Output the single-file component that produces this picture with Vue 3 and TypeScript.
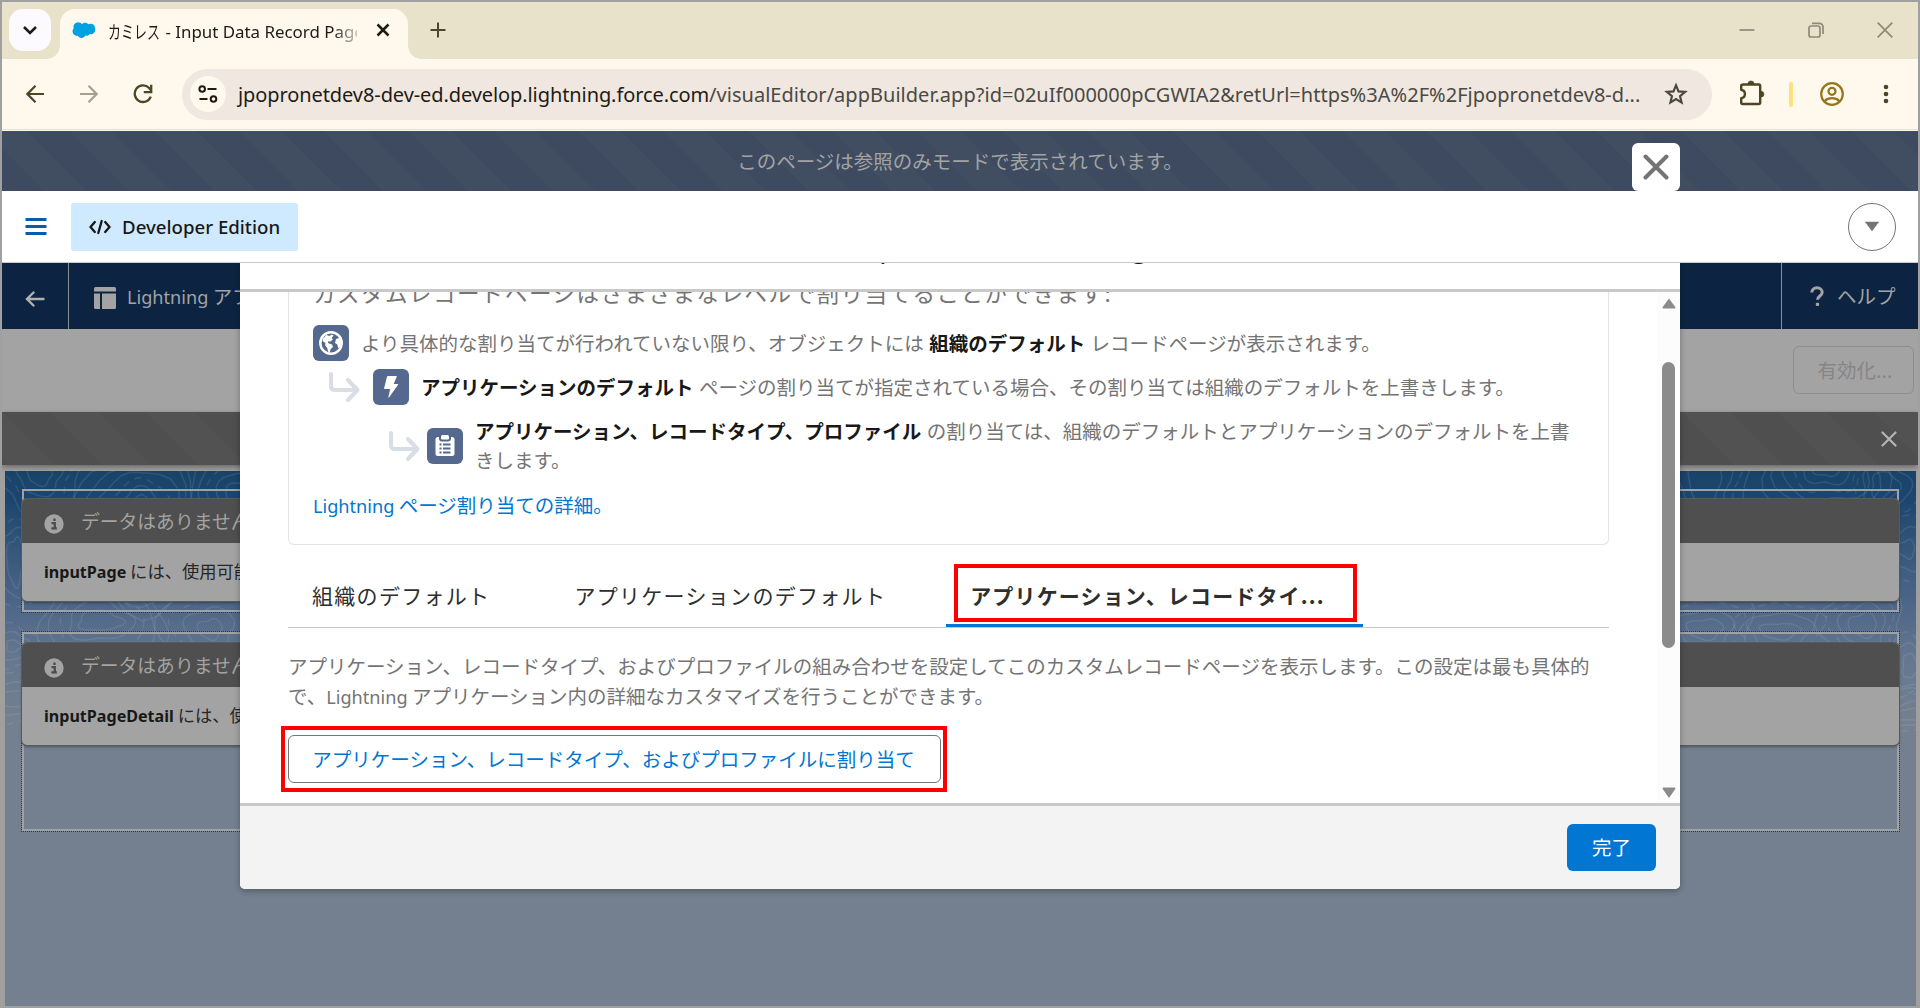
<script setup lang="ts">
import { ref } from 'vue'

interface Region { id: string; name: string; rest: string }

const url = {
  host: 'jpopronetdev8-dev-ed.develop.lightning.force.com',
  path: '/visualEditor/appBuilder.app?id=02uIf000000pCGWIA2&retUrl=https%3A%2F%2Fjpopronetdev8-d...',
}

const regions: Region[] = [
  { id: 'first', name: 'inputPage', rest: 'には、使用可能なデータがありません。' },
  { id: 'second', name: 'inputPageDetail', rest: 'には、使用可能なデータがありません。' },
]

const tabs = ['組織のデフォルト', 'アプリケーションのデフォルト', 'アプリケーション、レコードタイ...']
const activeTab = ref(2)

// Contour rings of the topographic backdrop
interface Hill { x: number; y: number; rx: number; ry: number; n: number; step: number }
const hills: Hill[] = [
  { x: 35, y: 4, rx: 12, ry: 10, n: 4, step: 10 },
  { x: 10, y: 90, rx: 8, ry: 24, n: 3, step: 10 },
  { x: 130, y: 60, rx: 20, ry: 34, n: 6, step: 9 },
  { x: 235, y: 30, rx: 14, ry: 20, n: 5, step: 9 },
  { x: 95, y: 150, rx: 22, ry: 10, n: 5, step: 10 },
  { x: 205, y: 158, rx: 12, ry: 10, n: 4, step: 12 },
  { x: 8, y: 175, rx: 7, ry: 6, n: 3, step: 8 },
  { x: 14, y: 228, rx: 18, ry: 8, n: 3, step: 8 },
  { x: 1700, y: 10, rx: 16, ry: 26, n: 4, step: 10 },
  { x: 1822, y: -6, rx: 14, ry: 12, n: 6, step: 9 },
  { x: 1880, y: 15, rx: 14, ry: 14, n: 3, step: 10 },
  { x: 1902, y: 78, rx: 8, ry: 9, n: 3, step: 12 },
  { x: 1700, y: 158, rx: 18, ry: 10, n: 4, step: 10 },
  { x: 1775, y: 160, rx: 20, ry: 8, n: 3, step: 11 },
  { x: 1858, y: 154, rx: 14, ry: 12, n: 4, step: 9 },
  { x: 1905, y: 195, rx: 8, ry: 12, n: 3, step: 9 },
  { x: 1910, y: 244, rx: 22, ry: 6, n: 4, step: 6 },
]
function ring(h: Hill, i: number): string {
  const pts: string[] = []
  for (let a = 0; a < 360; a += 12) {
    const t = (a * Math.PI) / 180
    const w = 1 + 0.12 * Math.sin(3 * t + h.x) + 0.07 * Math.cos(5 * t + i)
    const x = h.x + (h.rx + h.step * i) * w * Math.cos(t)
    const y = h.y + (h.ry + h.step * i) * w * Math.sin(t)
    pts.push(`${x.toFixed(1)} ${y.toFixed(1)}`)
  }
  return `M${pts.join('L')}Z`
}
const contours = hills.flatMap((h) =>
  Array.from({ length: h.n }, (_, i) => ({ d: ring(h, i), dashed: i % 4 === 2 })),
)
</script>

<template>
  <div class="window">
    <header class="tabstrip">
      <button class="tab-search">
        <svg width="16" height="10" viewBox="0 0 16 10"><path d="M2 2l6 6 6-6" fill="none" stroke="#1c1b14" stroke-width="2.6" /></svg>
      </button>
      <div class="tab">
        <svg class="cloud" width="24" height="17" viewBox="0 0 24 17">
          <path d="M10 2.2C11 1 12.300 .5 13.700 .7c1 .2 1.900 .7 2.500 1.600C18.500 1.200 21 1.700 22.300 3.700c1.800 2.900 1.200 6.900-2 8.200-.9 .3-1.700 .4-2.500 .2-1 1.700-2.900 2.100-4.600 1.500-1 2.700-5.700 3.500-7.300 .2C3.200 14.300 .9 12.500 .6 10 .4 8.500 .9 7.200 1.800 6.300 .8 3.300 2.400 .8 5.200 .4 7 .1 8.800 .8 10 2.200z" fill="#00a1e0" />
        </svg>
        <div class="tab-title"><span class="kana">カミレス</span><span class="rest"> - Input Data Record Page</span></div>
        <svg class="tab-close" width="14" height="14" viewBox="0 0 14 14"><path d="M1.500 1.500l11 11M12.500 1.500l-11 11" stroke="#1c1b14" stroke-width="2.500" /></svg>
      </div>
      <svg class="plus" width="16" height="16" viewBox="0 0 16 16"><path d="M8 .5v15M.5 8h15" stroke="#4a472f" stroke-width="2" /></svg>
      <div class="controls">
        <svg width="16" height="16" viewBox="0 0 16 16"><path d="M.5 8h15" stroke="#8e8979" stroke-width="1.700" /></svg>
        <svg width="16" height="16" viewBox="0 0 16 16"><g fill="none" stroke="#8e8979" stroke-width="1.700"><rect x="1" y="4" width="11" height="11" rx="2" /><path d="M4 1.300h7.500a3.500 3.500 0 0 1 3.500 3.500V12" /></g></svg>
        <svg width="16" height="16" viewBox="0 0 16 16"><path d="M.7 .7l14.600 14.600M15.300 .7L.7 15.300" stroke="#8e8979" stroke-width="1.700" /></svg>
      </div>
    </header>

    <div class="toolbar">
      <svg class="nav-back" width="18" height="18" viewBox="0 0 18 18"><path d="M18 9H1.500M9.500 .8L1.400 9l8.100 8.200" fill="none" stroke="#4d4526" stroke-width="2.200" /></svg>
      <svg class="nav-fwd" width="18" height="18" viewBox="0 0 18 18"><path d="M0 9h16.500M8.500 .8L16.600 9l-8.100 8.200" fill="none" stroke="#a6a08f" stroke-width="2.200" /></svg>
      <svg class="nav-reload" width="20" height="20" viewBox="0 0 20 20"><path d="M17.800 12.600a8.300 8.300 0 1 1-1.700-8.600l2 2.300" fill="none" stroke="#4d4526" stroke-width="2.300" /><path d="M18.200 .8v7.300h-7.400" fill="none" stroke="#4d4526" stroke-width="2.300" /></svg>
      <div class="omnibox">
        <span class="site-info">
          <svg width="20" height="18" viewBox="0 0 20 18"><g fill="none" stroke="#1c1b14" stroke-width="2"><circle cx="4.200" cy="4" r="2.800" /><path d="M9.500 4h9M1.500 14h8" /><circle cx="15.500" cy="14" r="2.800" /></g></svg>
        </span>
        <span class="url"><span class="url-host">{{ url.host }}</span>{{ url.path }}</span>
        <svg class="star" width="24" height="24" viewBox="0 0 24 24"><path d="M12 3.200l2.500 6.200 6.600 .5-5.100 4.200 1.600 6.500L12 17.100l-5.600 3.500L8 14.100 2.900 9.900l6.600-.5z" fill="none" stroke="#47463f" stroke-width="2.100" /></svg>
      </div>
      <svg class="puzzle" width="26" height="26" viewBox="0 0 26 26"><path d="M4.200 4.500h15.500q1.500 0 1.500 1.500v16.500q0 1.500-1.500 1.500H3.700q-1.500 0-1.500-1.500v-4.200c5-1 5-7.600 0-8.600V6q0-1.500 2-1.500z" fill="none" stroke="#4d4526" stroke-width="2.400" stroke-linejoin="round" /><path d="M8.900 4a3.100 3.100 0 0 1 6.200 0zM22 11.300a2.900 2.900 0 0 1 0 5.800z" fill="#4d4526" stroke="#4d4526" stroke-width=".6" /></svg>
      <i class="divider"></i>
      <svg class="profile" width="24" height="24" viewBox="0 0 24 24"><g fill="none" stroke="#94781c" stroke-width="2.200"><circle cx="12" cy="12" r="10.800" /><circle cx="12" cy="9.300" r="3.500" /><path d="M4.500 19.200c4-4 11-4 15 0" /></g></svg>
      <svg class="dots" width="6" height="20" viewBox="0 0 6 20"><g fill="#4d4526"><circle cx="3" cy="3" r="2.300" /><circle cx="3" cy="10" r="2.300" /><circle cx="3" cy="17" r="2.300" /></g></svg>
    </div>

    <div class="banner">このページは参照のみモードで表示されています。</div>

    <div class="org-bar">
      <svg width="22" height="19" viewBox="0 0 22 19"><path d="M.5 2.500h21M.5 9.500h21M.5 16.500h21" stroke="#0b5cab" stroke-width="2.800" /></svg>
      <div class="edition">
        <svg width="22" height="16" viewBox="0 0 22 16"><g fill="none" stroke="#181818" stroke-width="2.300" stroke-linecap="round"><path d="M5.800 3L1.500 8l4.300 5M16.200 3l4.300 5-4.300 5" /><path d="M12.700 2L9.300 14" /></g></svg>
        <span>Developer Edition</span>
      </div>
      <span class="round"><svg width="16" height="11" viewBox="0 0 16 11"><path d="M.8 .8h14.400L8 10.200z" fill="#747474" /></svg></span>
    </div>

    <nav class="builder-bar">
      <span class="bb-back"><svg width="20" height="16" viewBox="0 0 20 16"><path d="M18.500 8H2M8.500 1.500L2 8l6.500 6.500" fill="none" stroke="#b0b0b0" stroke-width="2.400" stroke-linecap="round" /></svg></span>
      <span class="bb-name">
        <svg width="22" height="22" viewBox="0 0 22 22"><g fill="#a3a3a3"><path d="M1.500 0h19Q22 0 22 1.500V4.500H0V1.500Q0 0 1.500 0z" /><path d="M0 6.500h6V22H1.500Q0 22 0 20.500zM8 6.500h14v14q0 1.500-1.500 1.500H8z" /></g></svg>
        <span class="bb-text"><span class="en">Lightning</span> アプリケーションビルダー</span>
      </span>
      <span class="bb-help">
        <svg width="14" height="21" viewBox="0 0 14 21"><path d="M1.800 6.500C1.800 3.500 4 1.800 7 1.800s5.200 1.800 5.200 4.400c0 3.700-4.700 3.900-4.700 7.600" fill="none" stroke="#a3a3a3" stroke-width="3" /><rect x="5.800" y="16.800" width="3.300" height="3.300" rx="1" fill="#a3a3a3" /></svg>
        <span class="bb-text">ヘルプ</span>
      </span>
    </nav>

    <div class="action-bar"><button class="activate">有効化...</button></div>

    <div class="notice">
      <svg width="16" height="16" viewBox="0 0 16 16"><path d="M1.500 1.500l13 13M14.500 1.500l-13 13" stroke="#b4b4b4" stroke-width="2.200" stroke-linecap="round" /></svg>
    </div>

    <div class="stage">
      <div class="canvas">
        <svg class="topo" width="1911" height="262" viewBox="0 0 1911 262">
          <path v-for="(c, i) in contours" :key="i" :d="c.d" :stroke-dasharray="c.dashed ? '7 6' : undefined" />
        </svg>
        <section v-for="r in regions" :key="r.id" class="region" :class="r.id">
          <div class="region-in">
            <article class="card">
              <h3>
                <svg width="20" height="20" viewBox="0 0 20 20"><circle cx="10" cy="10" r="9.700" fill="#a3a3a3" /><path d="M10.500 4.600v2.500M7.500 9.200h3.300v4.800M7.300 14.300h5.600" fill="none" stroke="#4d4d4d" stroke-width="2.300" /></svg>
                データはありません
              </h3>
              <p><b class="en">{{ r.name }}</b> {{ r.rest }}</p>
            </article>
          </div>
        </section>
      </div>
    </div>

    <div class="modal">
      <div class="modal-head"><h2><span class="en">Activation: Input Data Record Page</span></h2></div>
      <div class="modal-body">
        <div class="scroll">
          <section class="levels">
            <h4>カスタムレコードページはさまざまなレベルで割り当てることができます:</h4>
            <div class="level l1">
              <span class="badge"><svg width="26" height="26" viewBox="0 0 26 26"><circle cx="13" cy="13" r="10.700" fill="none" stroke="#fff" stroke-width="2.500" /><path d="M5 8.500L8.500 5l3 1 2-1.500 2.200 1-2 2.500 1.200 1.500-2.500 2-2.600-.3 .6 2 3.600 1.300 1 2.500-2.300 2-1 3.700-1.700-1.200-.8-3.500-2-2.500 .2-2.500L4.500 11z" fill="#fff" /><path d="M18 9l3.500-1 1.800 3.500-.8 5.500-2.300 1-1-3.700-2.200-1.200z" fill="#fff" /></svg></span>
              <p>より具体的な割り当てが行われていない限り、オブジェクトには <b>組織のデフォルト</b> レコードページが表示されます。</p>
            </div>
            <div class="level l2">
              <svg class="elbow" width="33" height="31" viewBox="0 0 33 31"><path d="M3 2v12q0 4 4 4h22M20 8l9.500 10L20 28" fill="none" stroke="#d8dde6" stroke-width="4" stroke-linecap="round" stroke-linejoin="round" /></svg>
              <span class="badge"><svg width="16" height="24" viewBox="0 0 16 24"><path d="M5 1h8.300q.7 0 .4 .7L10.700 9h4q.8 0 .4 .8L6 22.500q-.8 .7-.6-.4L7.200 14H1.600q-.7 0-.5-.8L4 1.700Q4.200 1 5 1z" fill="#fff" /></svg></span>
              <p><b>アプリケーションのデフォルト</b> ページの割り当てが指定されている場合、その割り当ては組織のデフォルトを上書きします。</p>
            </div>
            <div class="level l3">
              <svg class="elbow" width="33" height="31" viewBox="0 0 33 31"><path d="M3 2v12q0 4 4 4h22M20 8l9.500 10L20 28" fill="none" stroke="#d8dde6" stroke-width="4" stroke-linecap="round" stroke-linejoin="round" /></svg>
              <span class="badge"><svg width="20" height="24" viewBox="0 0 20 24"><path d="M3 3h1v1.500Q4 7.500 7 7.500h6q3 0 3-3V3h1q2.500 0 2.500 2.500v14q0 2.500-2.500 2.500H3Q.5 22 .5 19.500v-14Q.5 3 3 3z" fill="#fff" /><path d="M7.500 1h5Q14 1 14 2.500v1.800q0 1.200-1.200 1.200H7.200Q6 5.500 6 4.300V2.500Q6 1 7.500 1z" fill="#fff" /><path d="M4.500 10.500h2M8 10.500h7.500M4.500 14.500h2M8 14.500h7.500M4.500 18.500h2M8 18.500h7.500" stroke="#54698d" stroke-width="1.800" /></svg></span>
              <p><b>アプリケーション、レコードタイプ、プロファイル</b> の割り当ては、組織のデフォルトとアプリケーションのデフォルトを上書<br />きします。</p>
            </div>
            <a class="more"><span class="en">Lightning</span> ページ割り当ての詳細。</a>
          </section>

          <div class="tabs">
            <div v-for="(t, i) in tabs" :key="t" class="tab-item" :class="{ active: i === activeTab }">
              <span>{{ t }}</span>
              <i v-if="i === activeTab" class="mark mark-tab"></i>
            </div>
          </div>
          <p class="desc">アプリケーション、レコードタイプ、およびプロファイルの組み合わせを設定してこのカスタムレコードページを表示します。この設定は最も具体的<br />で、<span class="en">Lightning</span> アプリケーション内の詳細なカスタマイズを行うことができます。</p>
          <button class="assign">アプリケーション、レコードタイプ、およびプロファイルに割り当て<i class="mark mark-btn"></i></button>
        </div>
        <div class="scrollbar">
          <svg width="14" height="11" viewBox="0 0 14 11"><path d="M7 .6L13.300 9q.6 1.500-.8 1.500H1.500Q.1 10.500 .7 9z" fill="#8b8b8b" /></svg>
          <i class="thumb"></i>
          <svg width="14" height="11" viewBox="0 0 14 11"><path d="M7 10.900L13.300 2q.6-1.500-.8-1.500H1.500Q.1 .5 .7 2z" fill="#8b8b8b" /></svg>
        </div>
      </div>
      <footer class="modal-foot"><button>完了</button></footer>
    </div>

    <button class="modal-close"><svg width="26" height="26" viewBox="0 0 26 26"><path d="M2.500 2.500l21 21M23.500 2.500l-21 21" stroke="#747474" stroke-width="4" stroke-linecap="round" /></svg></button>
  </div>
</template>

<style>
html, body { margin: 0; overflow: hidden; }
</style>

<style scoped>
* { box-sizing: border-box; }
svg { display: block; flex: none; }
button { font: inherit; margin: 0; padding: 0; border: 0; display: flex; align-items: center; justify-content: center; }
h2, h3, h4, p { margin: 0; font-weight: 400; }
.window {
  position: relative; width: 1920px; height: 1008px; overflow: hidden;
  display: flex; flex-direction: column;
  border: 2px solid #a0a0a0; background: #74808f;
  font: 19.5px "Noto Sans CJK JP", "Noto Sans", sans-serif; white-space: nowrap;
}
.en { font-family: "Noto Sans", sans-serif; font-size: .93em; }

.tabstrip { flex: none; height: 57px; padding: 7px 23px 0 7px; display: flex; background: #e9e2cb; }
.tab-search { width: 42px; height: 42px; border-radius: 14px; background: #fdfaff; }
.tab {
  position: relative; margin-left: 9px; width: 348px; height: 50px; padding: 0 18px 6px 12px;
  display: flex; align-items: center; background: #fff8ec; border-radius: 15px 15px 0 0;
}
.tab::before, .tab::after {
  content: ""; position: absolute; bottom: 0; width: 13px; height: 13px;
}
.tab::before { left: -13px; background: radial-gradient(circle at 0 0, transparent 12.500px, #fff8ec 13px); }
.tab::after { right: -13px; background: radial-gradient(circle at 100% 0, transparent 12.500px, #fff8ec 13px); }
.cloud { margin-top: -2px; }
.tab-title {
  margin-left: 12px; width: 252px; height: 30px; line-height: 30px; margin-top: 1px; overflow: hidden; display: flex;
  color: #1c1b14; font-size: 16.900px; font-family: "Noto Sans", "Noto Sans CJK JP", sans-serif; white-space: pre;
  -webkit-mask-image: linear-gradient(90deg, #000 225px, transparent 256px);
}
.kana { display: inline-block; width: 53px; font-size: 18px; transform: scaleX(.72); transform-origin: 0 50%; }
.tab-close { margin-left: 19px; margin-top: -2px; }
.plus { margin: 13px 0 0 22px; }
.controls { margin-left: auto; padding: 13px 2px 0 0; display: flex; gap: 53px; }

.toolbar {
  flex: none; height: 72px; padding: 0 29px 2px 24px; display: flex; align-items: center;
  background: linear-gradient(#e9e2cb, #e9e2cb) 0 70px / 100% 1px no-repeat #fff8ec;
}
.nav-fwd { margin-left: 36px; }
.nav-reload { margin-left: 35px; }
.omnibox { margin-left: 29px; width: 1530px; height: 51px; border-radius: 26px; background: #efe7e0; display: flex; align-items: center; padding: 0 24px 0 8px; }
.site-info { width: 36px; height: 36px; border-radius: 50%; background: #fff8ec; display: flex; align-items: center; justify-content: center; }
.url { margin-left: 12px; width: 1402px; font: 20px "Noto Sans", sans-serif; color: #4b4943; letter-spacing: .025px; }
.url-host { color: #1f1b16; letter-spacing: -.09px; }
.star { margin-left: auto; }
.puzzle { margin-left: 27px; margin-top: -3px; }
.divider { margin-left: 24px; width: 4px; height: 25px; border-radius: 2px; background: #ffe07d; }
.profile { margin-left: 27px; }
.dots { margin-left: auto; }

.banner {
  flex: none; height: 60px; line-height: 60px; text-align: center; color: #a3a3a3;
  background: repeating-linear-gradient(45deg, #3e4a60 0 30px, #414d60 30px 60px);
}
.org-bar {
  flex: none; position: relative; z-index: 3; height: 72px; padding: 0 22px 0 23px; display: flex; align-items: center;
  background: #fff; border-bottom: 1px solid #c9c9c9;
}
.edition { margin-left: 24px; width: 227px; height: 48px; padding-left: 18px; display: flex; align-items: center; background: #cfe9fe; border-radius: 3px; font: 500 18.650px "Noto Sans", sans-serif; color: #181818; }
.edition span { margin-left: 11px; }
.round { margin-left: auto; width: 48px; height: 48px; border: 1px solid #747474; border-radius: 50%; display: flex; align-items: center; justify-content: center; }

.builder-bar { flex: none; height: 66px; display: flex; background: #0c2442; color: #a3a3a3; }
.builder-bar > span { display: flex; align-items: center; }
.bb-back { width: 67px; padding-left: 23px; padding-top: 5px; border-right: 1px solid #8a8f96; }
.bb-name { padding-left: 25px; gap: 11px; }
.bb-name svg { margin-top: 4px; }
.bb-text { margin-top: -2px; }
.bb-help { margin-left: auto; width: 137px; padding-left: 28px; gap: 13px; border-left: 1px solid #8a8f96; }

.action-bar { flex: none; height: 83px; padding: 17px 4px 0 0; background: #a3a3a3; display: flex; justify-content: flex-end; }
.activate { width: 121px; height: 48px; padding: 0 0 1px 3px; border: 1px solid #8d8d8d; border-radius: 6px; background: #a3a3a3; color: #868686; }
.notice {
  flex: none; position: relative; z-index: 1; height: 53px; padding: 0 21px; display: flex; align-items: center; justify-content: flex-end;
  background: linear-gradient(45deg, #4f4f4f 25%, #525252 25% 50%, #4f4f4f 50% 75%, #525252 75%) 0 0 / 96px 96px;
  box-shadow: 0 2px 5px rgba(0, 0, 0, .35);
}

.stage { flex: 1; background: #a09f9d; padding: 6px 2px 0 3px; display: flex; }
.canvas {
  position: relative; flex: 1; overflow: hidden; padding: 17px 16px 0 16px;
  background: linear-gradient(#1a436a 0, #1d466e 30px, #38597c 85px, #53698a 145px, #64778f 185px, #74808f 250px);
}
.topo { position: absolute; left: 0; top: 0; fill: none; stroke: rgba(190, 205, 220, .13); stroke-width: 1.500; }
.region { position: relative; border: 1px dotted #24395c; }
.first { height: 125px; }
.second { height: 201px; margin-top: 18px; }
.region-in { height: 100%; border: 2px solid #9fa2a5; }
.card { margin: 8px -2px 0; border-radius: 5px; overflow: hidden; box-shadow: 0 0 0 1px #5a5a5a, 0 2px 3px rgba(0, 0, 0, .35); background: #a3a3a3; }
.second .card { margin-top: 9px; }
.card h3 { height: 44px; display: flex; align-items: center; gap: 17px; padding: 0 0 1px 22px; background: #4f4f4f; color: #a3a3a3; font-size: 18.800px; }
.card h3 svg { margin-top: 6px; }
.card p { height: 58px; line-height: 56px; padding-left: 22px; color: #262626; font-size: 17.300px; }
.card b { color: #181818; }

.modal {
  position: absolute; z-index: 2; left: 238px; top: 261px; width: 1440px; height: 626px; display: flex; flex-direction: column;
  background: #fff; border-radius: 0 0 5px 5px; box-shadow: 0 2px 6px rgba(0, 0, 0, .3);
}
.modal-head { flex: none; height: 29px; border-bottom: 3px solid #c9c9c9; position: relative; overflow: hidden; }
.modal-head h2 { line-height: 30px; margin-top: -34px; padding-right: 48px; text-align: center; font-size: 30px; color: #181818; }
.modal-body { flex: none; height: 511px; display: flex; overflow: hidden; }
.scroll { flex: 1; padding: 0 48px; color: #747474; }
.levels { display: flow-root; width: 1321px; height: 253px; padding-left: 24px; border: 1px solid #e3e3e3; border-top: 0; border-radius: 0 0 6px 6px; }
.levels h4 { height: 33px; line-height: 32px; margin-top: -16px; letter-spacing: 1.500px; font-size: 22.500px; }
.level { display: flex; align-items: center; }
.level b { color: #181818; }
.badge { width: 36px; height: 36px; border-radius: 6px; background: #54698d; display: flex; align-items: center; justify-content: center; flex: none; }
.level p { line-height: 29px; margin-top: -2px; }
.l1 { height: 36px; margin-top: 16px; }
.l1 p { margin-left: 12px; word-spacing: 1px; }
.l2 { height: 36px; margin-top: 8px; padding-left: 15px; }
.l2 .badge { margin-left: 12px; }
.l2 p { margin-left: 12px; word-spacing: 1px; }
.l3 { height: 58px; margin-top: 12px; padding-left: 75px; }
.l3 .badge { margin-left: 6px; }
.l3 p { margin-left: 12px; word-spacing: 1px; }
.more { display: block; margin-top: 16px; line-height: 28px; color: #0176d3; }
.tabs { width: 1321px; height: 83px; display: flex; border-bottom: 1px solid #c9c9c9; }
.tab-item { position: relative; padding: 20px 24px 0; margin-right: 36px; line-height: 61px; color: #2e2e2e; font-size: 21px; letter-spacing: 1.300px; }
.tab-item.active { width: 417px; margin: 0; padding-left: 24px; font-weight: 700; letter-spacing: 1.150px; border-bottom: 3px solid #0176d3; }
.mark { position: absolute; border: 4px solid #f00; }
.mark-tab { left: 8px; top: 19px; width: 403px; height: 58px; }
.mark-btn { left: -8px; top: -10px; width: 666px; height: 66px; }
.desc { margin-top: 23px; line-height: 30px; }
.assign { position: relative; margin-top: 23px; padding: 0 2px 2px 0; width: 653px; height: 48px; border: 1px solid #747474; border-radius: 6px; background: #fff; color: #0176d3; }
.scrollbar { width: 23px; background: #fcfcfc; display: flex; flex-direction: column; align-items: center; padding: 6px 0 5px; }
.thumb { margin: 53px 0 auto; width: 13px; height: 286px; border-radius: 7px; background: #8b8b8b; }
.modal-foot { flex: 1; border-top: 3px solid #c9c9c9; background: #f3f3f3; border-radius: 0 0 5px 5px; padding: 18px 24px; display: flex; justify-content: flex-end; }
.modal-foot button { width: 89px; height: 47px; padding-bottom: 2px; border-radius: 6px; background: #0176d3; color: #fff; }
.modal-close { position: absolute; z-index: 4; left: 1630px; top: 141px; width: 48px; height: 48px; border-radius: 6px; background: #fff; }
</style>
